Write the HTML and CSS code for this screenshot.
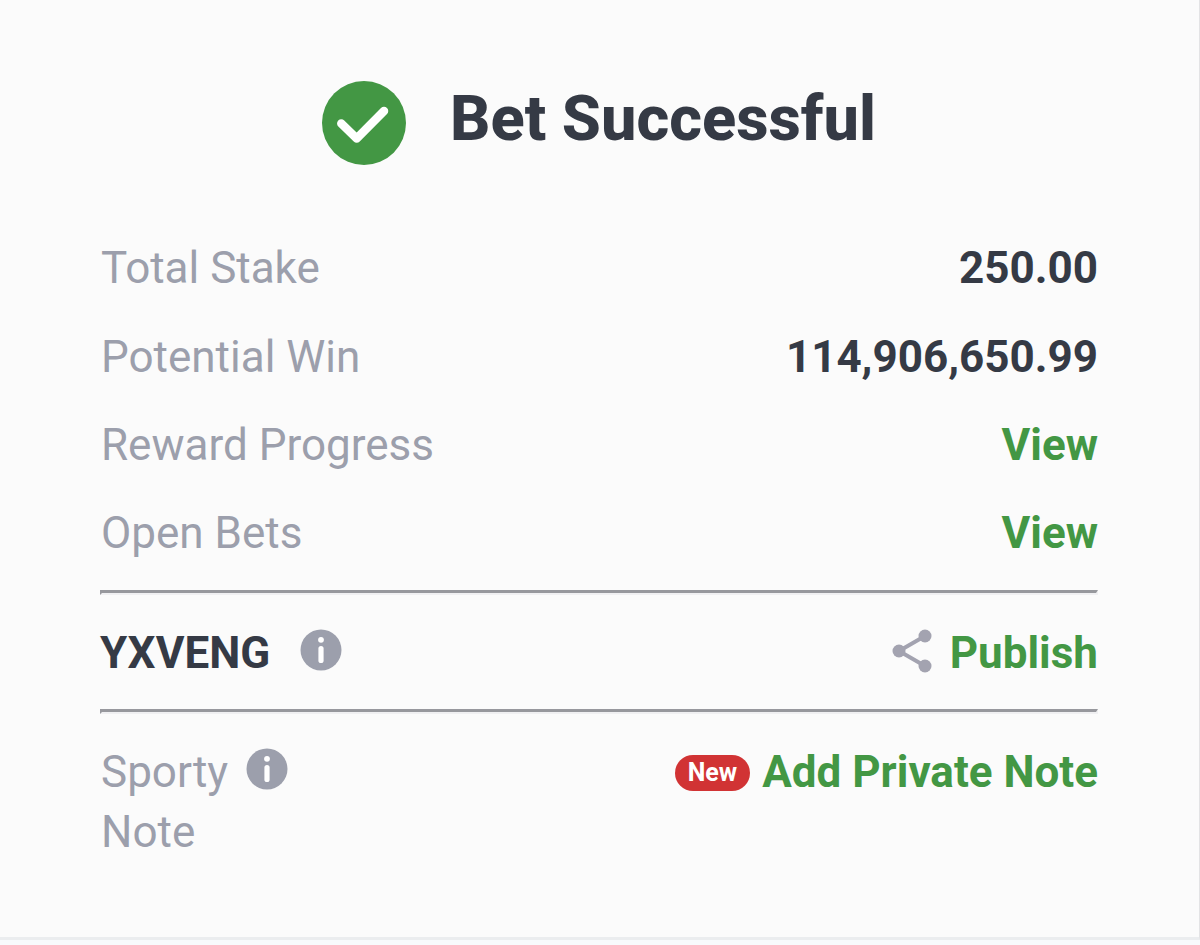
FILE: index.html
```html
<!DOCTYPE html>
<html lang="en">
<head>
<meta charset="utf-8">
<meta name="viewport" content="width=device-width, initial-scale=1">
<title>Bet Successful</title>
<link rel="stylesheet" href="styles.css">
</head>
<body>
<main class="card">
  <header class="head">
    <svg class="check" viewBox="0 0 84 84" aria-hidden="true"><circle cx="42" cy="42" r="42" fill="#439744"/><path d="M19.300 42.500l15.400 15L62 30" fill="none" stroke="#fff" stroke-width="8.500" stroke-linecap="round" stroke-linejoin="round"/></svg>
    <h1 class="title">Bet Successful</h1>
  </header>
  <dl class="rows">
    <div class="row"><dt class="label">Total Stake</dt><dd class="value">250.00</dd></div>
    <div class="row"><dt class="label">Potential Win</dt><dd class="value">114,906,650.99</dd></div>
    <div class="row"><dt class="label">Reward Progress</dt><dd class="value"><a class="link" href="#rewards">View</a></dd></div>
    <div class="row"><dt class="label">Open Bets</dt><dd class="value"><a class="link" href="#bets">View</a></dd></div>
  </dl>
  <hr class="rule">
  <section class="code">
    <span class="code-text">YXVENG</span>
    <button class="info" type="button" aria-label="About booking code"><svg class="info-icon" viewBox="0 0 42 42"><circle cx="21" cy="21" r="20.500" fill="#9c9fac"/><circle cx="21" cy="10.800" r="2.900" fill="#fff"/><path d="M21 19.500v12" fill="none" stroke="#fff" stroke-width="5.200" stroke-linecap="round"/></svg></button>
    <button class="action publish" type="button"><svg class="share" viewBox="0 0 40 44" aria-hidden="true"><path d="M33 7L7 22l26 15" fill="none" stroke="#a3a3b0" stroke-width="4"/><g fill="#a3a3b0"><circle cx="33" cy="7" r="6.500"/><circle cx="7" cy="22" r="6.500"/><circle cx="33" cy="37" r="6.500"/></g></svg>Publish</button>
  </section>
  <hr class="rule">
  <section class="note">
    <span class="label note-label">Sporty Note</span>
    <button class="info" type="button" aria-label="About notes"><svg class="info-icon" viewBox="0 0 42 42"><circle cx="21" cy="21" r="20.500" fill="#9c9fac"/><circle cx="21" cy="10.800" r="2.900" fill="#fff"/><path d="M21 19.500v12" fill="none" stroke="#fff" stroke-width="5.200" stroke-linecap="round"/></svg></button>
    <button class="action add" type="button"><span class="badge">New</span>Add Private Note</button>
  </section>
</main>
</body>
</html>
```
FILE: styles.css
```css
* { box-sizing: border-box; }
body { margin: 0; min-height: 100vh; padding-bottom: 5px; display: flex; flex-direction: column; background: #f8fafc; font-family: Roboto, sans-serif; font-size: 44px; line-height: 60px; color: #353a45; }
.card { flex: 1; padding: 73px 101px 73px 100px; background: #fbfbfb; border-right: 1px solid #e3e3e5; border-bottom: 3px solid #ebedef; }
.head { display: flex; justify-content: center; align-items: center; gap: 44px; }
.check { width: 84px; height: 84px; margin-top: 8px; }
.title { margin: 0; font-size: 63px; line-height: 84px; font-weight: 800; }
.rows { margin: 73px 0 0; padding: 0 0 27px; display: grid; gap: 28px; }
.row { display: flex; justify-content: space-between; }
.row:first-child { margin-bottom: 1px; }
.label { padding-left: 1px; color: #9c9fac; }
.value { margin: 0; font-weight: 700; }
.link { color: #439744; text-decoration: none; }
.rule { height: 5px; margin: 0; border-style: solid; border-width: 3px 2px 2px; border-color: #97989d #f0f0f2 #f0f0f2 #97989d; }
.code, .note { display: flex; align-items: flex-start; }
.code { padding: 28px 0 26px; }
.code-text { font-weight: 700; }
button { padding: 0; border: 0; background: none; font: inherit; }
.info { height: 42px; margin: 6px 0 0 30px; display: flex; }
.info-icon { width: 42px; height: 42px; }
.action { margin-left: auto; display: flex; align-items: center; color: #439744; font-weight: 700; }
.share { width: 40px; height: 44px; margin: 0 18px 4px 0; }
.note { padding-top: 28px; }
.note-label { width: 126px; }
.note .info { margin-left: 20px; }
.badge { padding: 0 13px; margin: 2px 12px 0 0; border-radius: 18px; background: #d13334; color: #fff; font-size: 25px; line-height: 36px; }
```
